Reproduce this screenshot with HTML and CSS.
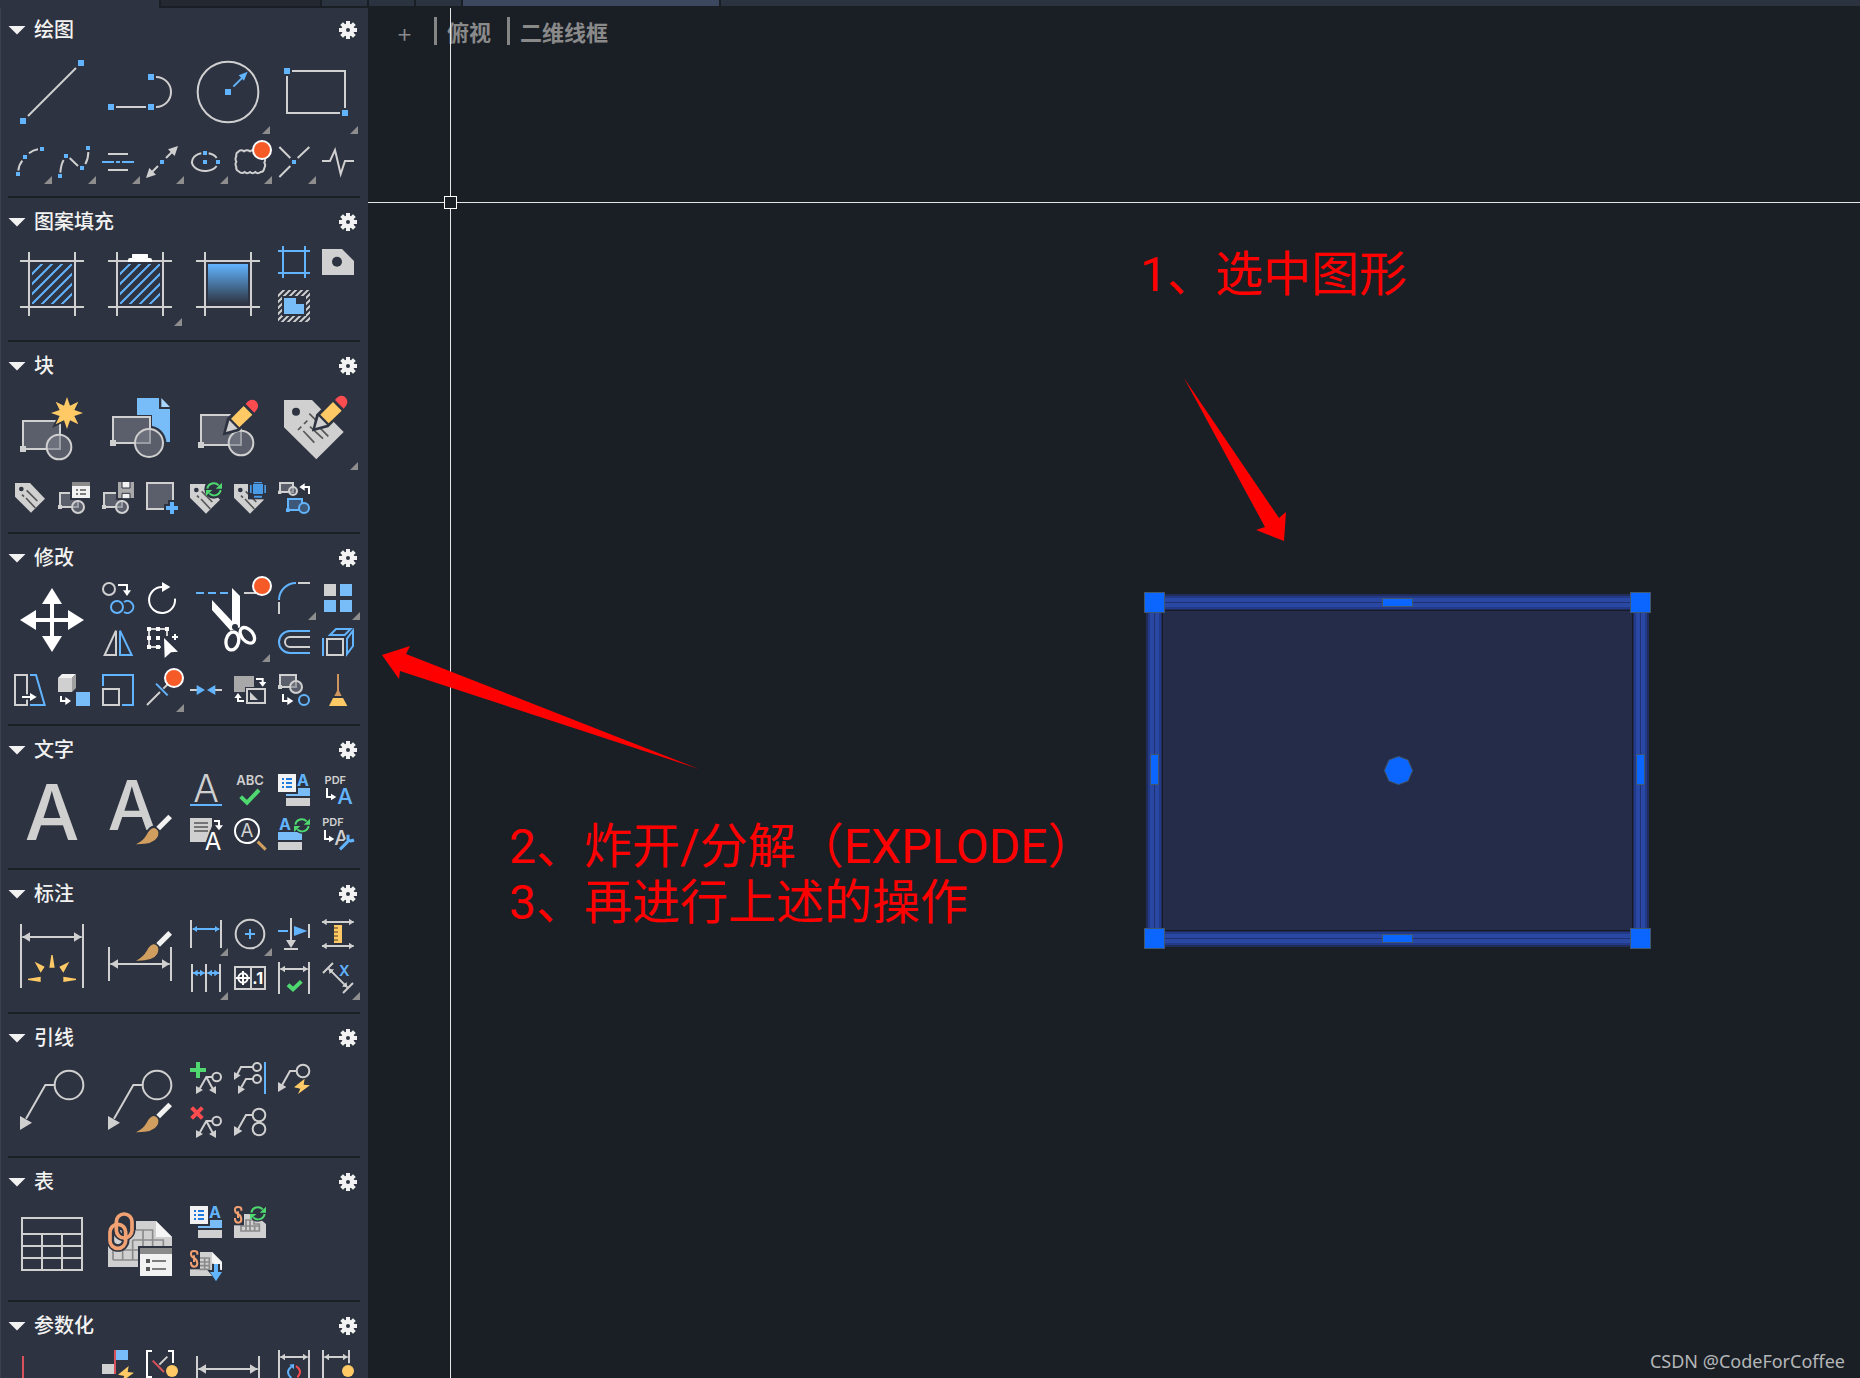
FILE: index.html
```html
<!DOCTYPE html>
<html lang="zh-CN">
<head>
    <meta charset="UTF-8">
    <meta name="viewport" content="width=device-width, initial-scale=1.0">
    <title>CAD 工具面板</title>
    <link rel="stylesheet" href="styles.css">
</head>
<body>
<!-- shared shapes -->
<svg class="defs" aria-hidden="true">
    <defs>
        <marker id="head" viewBox="0 0 24 30" refX="24" refY="15" markerWidth="24" markerHeight="30" markerUnits="userSpaceOnUse" orient="auto-start-reverse"><path d="M0 0L24 15L0 30z" fill="#d0d0d0"/></marker>
        <marker id="head-s" viewBox="0 0 14 20" refX="14" refY="10" markerWidth="14" markerHeight="20" markerUnits="userSpaceOnUse" orient="auto-start-reverse"><path d="M0 0L14 10L0 20z" fill="#d0d0d0"/></marker>
        <marker id="head-b" viewBox="0 0 14 20" refX="14" refY="10" markerWidth="14" markerHeight="20" markerUnits="userSpaceOnUse" orient="auto-start-reverse"><path d="M0 0L14 10L0 20z" fill="#62b4ff"/></marker>
        <linearGradient id="fade" x1="0" y1="0" x2="0" y2="1"><stop offset="0" stop-color="#62b4ff"/><stop offset="1" stop-color="#2d3340"/></linearGradient>
    </defs>
    <symbol id="gear" viewBox="-9 -9 18 18">
        <g fill="#f2f2f2">
            <rect x="-2" y="-9" width="4" height="18"/>
            <rect x="-2" y="-9" width="4" height="18" transform="rotate(45)"/>
            <rect x="-2" y="-9" width="4" height="18" transform="rotate(90)"/>
            <rect x="-2" y="-9" width="4" height="18" transform="rotate(135)"/>
            <circle r="6.5"/>
        </g>
        <circle r="2" fill="#2d3340"/>
    </symbol>
    <symbol id="pencil" viewBox="0 0 104 104" overflow="visible">
        <path class="halo" d="M10 60L60 10Q76-4 90 8Q104 20 92 36L38 90L0 100z"/>
        <path fill="#ffca66" d="M17 58L55 20L81 46L42 84z"/>
        <path fill="#fd4c50" d="M61 14Q74-3 88 3Q104 14 95 30L87 40z"/>
        <path fill="#d0d0d0" d="M12 63L37 88L2 98z"/>
    </symbol>
    <symbol id="brush" viewBox="0 0 108 92" overflow="visible">
        <path class="halo" d="M0 91Q22 80 32 62Q46 36 60 42L96 2L107 13L68 54Q72 92 0 91z"/>
        <path fill="#d09e5f" d="M0 91Q22 80 32 62Q46 36 60 44Q72 52 64 70Q52 92 0 91z"/>
        <path fill="#f2f2f2" d="M61 38L97 2L108 13L72 49z"/>
    </symbol>
    <symbol id="refresh" viewBox="0 0 48 44">
        <path fill="none" stroke="#4ed86f" stroke-width="6" d="M4 20A20 20 0 0 1 38 10M44 24A20 20 0 0 1 10 34"/>
        <path fill="#4ed86f" d="M48 2V20H29zM0 42V24H19z"/>
    </symbol>
    <symbol id="tag" viewBox="0 0 96 96">
        <path class="fl" d="M3 3H48L93 50L51 92L3 44z"/>
        <circle cx="22" cy="21" r="7" fill="#2d3340"/>
        <path class="dk" d="M38 25L70 57M36 48L64 78M24 38l6 6"/>
    </symbol>
    <symbol id="field" viewBox="0 0 96 96">
        <path class="fb" d="M24 42H96V66H24z"/>
        <path class="halo" d="M0 0H54V54H0z"/>
        <path fill="#f2f2f2" d="M0 0H54V54H0z"/>
        <path stroke="#1f7ae0" stroke-width="6" d="M12 15h6M12 27h6M12 39h6M24 15h18M24 27h18M24 39h18"/>
        <text class="tb" x="75" y="36" font-size="48" font-weight="700">A</text>
        <path class="fl" d="M24 72H96V96H24z"/>
    </symbol>
    <symbol id="bolt" viewBox="0 0 48 48"><path fill="#ffca66" d="M32 0L0 26L19 30L12 46L48 20L29 18z"/></symbol>
    <symbol id="leaders" viewBox="0 0 96 96">
        <circle class="ln" cx="80" cy="45" r="13"/>
        <path class="ln" d="M67 45H49L29 80M49 45L68 80"/>
        <path class="fl" d="M18 72V96L39 84zM78 72V96L57 84z"/>
    </symbol>
</svg>

<div class="tabs">
    <span class="tab tab-blank"></span>
    <span class="tab tab-dark"></span>
    <span class="tab"></span>
    <span class="tab"></span>
    <span class="tab"></span>
    <span class="tab tab-active"></span>
    <span class="tab tab-rest"></span>
</div>

<div class="workspace">
<aside class="sidebar">

    <section class="panel">
        <div class="panel-head"><i class="caret"></i><h2>绘图</h2><button class="gear" aria-label="设置"><svg><use href="#gear"/></svg></button></div>
        <div class="tools">
            <button class="big" aria-label="直线"><svg viewBox="0 0 192 192"><path class="ln" d="M24 168L168 24"/><path class="bs" d="M0 174h18v18H0zM174 0h18v18h-18z"/></svg></button>
            <button class="big" aria-label="多段线"><svg viewBox="0 0 192 192"><path class="ln" d="M24 141H114M144 51a45 45 0 0 1 0 90"/><path class="bs" d="M0 132h18v18H0zM120 132h18v18h-18zM120 42h18v18h-18z"/></svg></button>
            <button class="big more" aria-label="圆"><svg viewBox="0 0 192 192"><circle class="ln" cx="96" cy="96" r="91"/><path class="bl" d="M112 80L140 52"/><path class="bs" d="M87 87h18v18H87zM155 35L128 46L144 62z"/></svg></button>
            <button class="big more" aria-label="矩形"><svg viewBox="0 0 192 192"><path class="ln" d="M24 33H183V144M168 159H9V48"/><path class="bs" d="M0 24h18v18H0zM174 150h18v18h-18z"/></svg></button>
        </div>
        <div class="tools row">
            <button class="more" aria-label="圆弧"><svg viewBox="0 0 96 96"><path class="ln" d="M13 74Q15 56 25 44M45 22Q57 12 72 10"/><path class="bs" d="M6 78h12v12H6zM27 27h12v12H27zM78 3h12v12H78z"/></svg></button>
            <button class="more" aria-label="样条曲线"><svg viewBox="0 0 96 96"><path class="ln" d="M7 80Q9 55 17 42M35 36L60 60M82 54Q91 38 91 18"/><path class="bs" d="M0 84h12v12H0zM18 24h12v12H18zM66 60h12v12H66zM84 0h12v12H84z"/></svg></button>
            <button class="more" aria-label="构造线"><svg viewBox="0 0 96 96"><path class="ln" d="M18 24H78M18 72H78"/><path class="bl" d="M0 48H36M42 48H54M60 48H96"/></svg></button>
            <button class="more" aria-label="射线"><svg viewBox="0 0 96 96"><path class="ln" d="M60 36L78 18M36 60L18 78"/><path class="fl" d="M96 0L66 10L86 30zM0 96L10 66L30 86z"/><path class="bs" d="M42 42h12v12H42z"/></svg></button>
            <button class="more" aria-label="椭圆"><svg viewBox="0 0 96 96"><path class="ln" d="M34 22A39 27 0 1 0 80 60M56 22A39 27 0 0 1 80 36"/><path class="bs" d="M39 15h12v12H39zM39 42h12v12H39zM78 42h12v12H78z"/></svg></button>
            <button class="more" aria-label="修订云线"><svg viewBox="0 0 96 96"><path class="ln" d="M12 18q8-9 18-2q9-6 18 0q9-6 18 0q9-6 18 2q10 6 6 16q6 7 1 16q5 8 0 16q-2 12-11 12q-9 7-16 0q-9 7-16 0q-9 7-16 0q-9 7-18-2q-9-4-7-13q-5-8 0-16q-5-8 0-16q-2-10 5-13z"/></svg><b class="dot"></b></button>
            <button class="more" aria-label="点"><svg viewBox="0 0 96 96"><path class="ln" d="M4 3L37 36M59 36L94 3M4 93L37 60"/><path class="bs" d="M42 42h12v12H42z"/></svg></button>
            <button aria-label="折断线"><svg viewBox="0 0 96 96"><path class="ln" d="M0 45H24L39 12L56 84L69 45H96"/></svg></button>
        </div>
    </section>

    <section class="panel">
        <div class="panel-head"><i class="caret"></i><h2>图案填充</h2><button class="gear" aria-label="设置"><svg><use href="#gear"/></svg></button></div>
        <div class="tools">
            <button class="big" aria-label="图案填充"><svg viewBox="0 0 192 192"><path class="ln" d="M27 0V192M165 0V192M0 27H192M0 165H192"/><svg x="36" y="36" width="120" height="120"><path class="bl" d="M-5 35L35-5M-5 65L65-5M-5 95L95-5M-5 125L125-5M25 125L125 25M55 125L125 55M85 125L125 85"/></svg></svg></button>
            <button class="big more" aria-label="填充工具"><svg viewBox="0 0 192 192"><path class="ln" d="M27 0V192M165 0V192M0 27H192M0 165H192"/><path class="halo" d="M66 14H126V30H66z"/><svg x="36" y="36" width="120" height="120"><path class="bl" d="M-5 35L35-5M-5 65L65-5M-5 95L95-5M-5 125L125-5M25 125L125 25M55 125L125 55M85 125L125 85"/></svg><path fill="#fff" d="M60 30V24q0-6 6-6h6V8q0-2 2-2h44q2 0 2 2v10h6q6 0 6 6v6z"/></svg></button>
            <button class="big" aria-label="渐变色"><svg viewBox="0 0 192 192"><path class="ln" d="M27 0V192M165 0V192M0 27H192M0 165H192"/><rect x="36" y="36" width="120" height="120" fill="url(#fade)"/></svg></button>
            <button aria-label="边界"><svg viewBox="0 0 96 96"><path class="bl" d="M0 15H96M0 81H96M15 0V96M81 0V96"/></svg></button>
            <button aria-label="面域"><svg class="clip" viewBox="0 0 96 96"><path class="ln" d="M-4 22L22-4M-4 40L40-4M-4 58L58-4M-4 76L76-4M-4 94L94-4M8 100L100 8M26 100L100 26M44 100L100 44M62 100L100 62M80 100L100 80"/><path fill="#2d3340" d="M12 18H84V78H12z"/><path class="fb" d="M18 24H54V42H78V72H18z"/></svg></button>
            <button aria-label="区域覆盖"><svg viewBox="0 0 96 96"><path class="fl" d="M0 9H60L96 45V87H0z"/><circle cx="45" cy="47" r="15" fill="#2d3340"/></svg></button>
        </div>
    </section>

    <section class="panel">
        <div class="panel-head"><i class="caret"></i><h2>块</h2><button class="gear" aria-label="设置"><svg><use href="#gear"/></svg></button></div>
        <div class="tools">
            <button class="big" aria-label="创建块"><svg viewBox="0 0 192 192"><path class="ln gf" d="M9 75H120V159H9z"/><circle class="ln gt" cx="117" cy="153" r="37"/><path class="fl" d="M0 150h18v18H0z"/><path fill="#ffca66" stroke="#2d3340" stroke-width="10" paint-order="stroke" d="M141 3L150 29L175 17L163 42L189 51L163 60L175 85L150 73L141 99L132 73L107 85L119 60L93 51L119 42L107 17L132 29z"/></svg></button>
            <button class="big" aria-label="插入块"><svg viewBox="0 0 192 192"><path class="fb" d="M87 6H153V39H186V138H120V60H87z"/><path fill="#a9d4fb" d="M160 6L186 33H160z"/><path class="halo" d="M15 63H126V141H15z"/><circle class="halo" cx="123" cy="141" r="46"/><path class="ln gf" d="M15 63H126V141H15z"/><circle class="ln gt" cx="123" cy="141" r="42"/><path class="fl" d="M6 132h18v18H6z"/></svg></button>
            <button class="big" aria-label="编辑块"><svg viewBox="0 0 192 192"><path class="ln gf" d="M15 57H135V147H15z"/><circle class="ln gt" cx="135" cy="141" r="37"/><path class="fl" d="M6 138h18v18H6z"/><use href="#pencil" x="88" y="10" width="104" height="104"/></svg></button>
            <button class="big more" aria-label="编辑属性"><svg viewBox="0 0 192 192"><path class="fl" d="M0 12H84L179 108L97 190L0 94z"/><circle cx="36" cy="47" r="12" fill="#2d3340"/><path class="dk" d="M58 105L91 140M78 92L117 128M104 92L133 121M76 53L100 77M42 102l10-10M60 84l10-10"/><use href="#pencil" x="92" y="-2" width="104" height="104"/></svg></button>
        </div>
        <div class="tools row">
            <button aria-label="定义属性"><svg><use href="#tag"/></svg></button>
            <button aria-label="块特性"><svg viewBox="0 0 96 96"><path class="ln gf" d="M6 33H60V75H6z"/><circle class="ln gt" cx="60" cy="75" r="18"/><path class="fl" d="M0 69h12v12H0z"/><path class="halo" d="M42 0H96V48H42z"/><path fill="#f2f2f2" d="M42 12H96V48H42z"/><path fill="#8a8a8a" d="M42 0H96V12H42z"/><path class="dk" d="M54 24h6M66 24h18M54 36h6M66 36h18"/></svg></button>
            <button aria-label="保存块"><svg class="clip" viewBox="0 0 96 96"><path class="ln gf" d="M6 33H60V75H6z"/><circle class="ln gt" cx="60" cy="75" r="18"/><path class="fl" d="M0 69h12v12H0z"/><path class="halo" d="M48 0H96V48H48z"/><path fill="#a8a8a8" d="M48 0H96V48H48z"/><path fill="#f2f2f2" stroke="#2d3340" stroke-width="3" d="M60-2H84V18H60zM60 34H84V50H60z"/></svg></button>
            <button aria-label="添加块"><svg viewBox="0 0 96 96"><path class="ln gf" d="M3 3H81V81H3z"/><path stroke="#2d3340" stroke-width="24" d="M78 54V96M54 78H96"/><path stroke="#62b4ff" stroke-width="12" d="M78 60V96M60 78H96"/></svg></button>
            <button aria-label="同步属性"><svg viewBox="0 0 96 96"><use href="#tag" x="-3" y="3" width="96" height="96"/><circle cx="71" cy="22" r="28" fill="#2d3340"/><use href="#refresh" x="48" y="0" width="48" height="44"/></svg></button>
            <button aria-label="管理属性"><svg viewBox="0 0 96 96"><use href="#tag" x="-3" y="3" width="96" height="96"/><path fill="#2d3340" d="M42-4H100V52H42z"/><path fill="#4a9be6" d="M57 6H87V36H57zM48 9h5V33h-5zM91 9h5V33h-5zM60 0H84V4H60zM60 41H84V47H60z"/></svg></button>
            <button aria-label="替换块"><svg viewBox="0 0 96 96"><path class="ln gf" d="M6 3H45V30H6z"/><circle class="ln gt" cx="45" cy="27" r="12"/><path class="fl" d="M0 26h10v10H0z"/><path class="wl" d="M93 36V15H78"/><path fill="#fff" d="M64 15L80 4V26z"/><path class="bl bf" d="M30 51H72V84H30z"/><circle class="bl bf" cx="78" cy="78" r="15"/><path class="bs" d="M24 79h11v11H24z"/></svg></button>
        </div>
    </section>

    <section class="panel">
        <div class="panel-head"><i class="caret"></i><h2>修改</h2><button class="gear" aria-label="设置"><svg><use href="#gear"/></svg></button></div>
        <div class="tools">
            <button class="big" aria-label="移动"><svg viewBox="0 0 192 192"><path stroke="#fff" stroke-width="12" d="M96 30V162M30 96H162"/><path fill="#fff" d="M96 0L126 48H66zM96 192L126 144H66zM0 96L48 66V126zM192 96L144 66V126z"/></svg></button>
            <button aria-label="复制"><svg viewBox="0 0 96 96"><circle class="ln" cx="21" cy="21" r="18"/><circle class="bl" cx="45" cy="75" r="18"/><path class="bl" d="M66 60a18 18 0 1 1 0 30"/><path class="wl" d="M48 9H75V28"/><path fill="#fff" d="M63 25H87L75 42z"/></svg></button>
            <button aria-label="镜像"><svg viewBox="0 0 96 96"><path class="ln" d="M42 14V87H8z"/><path class="bl" d="M54 14V87H89z"/></svg></button>
            <button aria-label="旋转"><svg viewBox="0 0 96 96"><path class="wl" d="M87 50A39 39 0 1 1 48 15"/><path fill="#fff" d="M48 0L73 15L48 30z"/></svg></button>
            <button aria-label="拉伸"><svg viewBox="0 0 96 96"><path class="ln" d="M63 30V9H9V63H45"/><path fill="#fff" d="M3 3h12v12H3zM30 3h12v12H30zM57 3h12v12H57zM3 30h12v12H3zM30 30h12v12H30zM3 57h12v12H3zM30 57h12v12H30zM54 36L96 77L75 79L56 96z"/><path class="wl" d="M87 24V42M78 33H96"/></svg></button>
            <button class="big more" aria-label="修剪"><svg viewBox="0 0 192 192"><path class="bl" d="M0 15H24M36 15H60M72 15H96"/><path class="ln" d="M144 15H180"/><path fill="#fff" d="M108 0L132 24V118L104 128L48 66V36L108 100z"/><circle cx="117" cy="117" r="9" fill="#2d3340"/><g fill="none" stroke="#fff" stroke-width="10"><ellipse cx="109" cy="159" rx="19" ry="27" transform="rotate(12 109 159)"/><ellipse cx="154" cy="142" rx="17" ry="27" transform="rotate(-40 154 142)"/></g></svg><b class="dot"></b></button>
            <button class="more" aria-label="圆角"><svg viewBox="0 0 96 96"><path class="bl" d="M3 54A51 51 0 0 1 54 3"/><path class="ln" d="M60 3H96M3 60V96"/></svg></button>
            <button aria-label="偏移"><svg viewBox="0 0 96 96"><path class="bl" d="M96 15H36a33 33 0 0 0 0 66H96"/><path class="ln" d="M96 33H36a15 15 0 0 0 0 30H96"/></svg></button>
            <button class="more" aria-label="阵列"><svg viewBox="0 0 96 96"><path class="fl" d="M6 6h36v36H6z"/><path class="fb" d="M54 6h36v36H54zM6 54h36v36H6zM54 54h36v36H54z"/></svg></button>
            <button aria-label="拉伸面"><svg viewBox="0 0 96 96"><path class="ln" d="M15 39H63V87H15z"/><path class="bl" d="M3 36V90M24 27L42 9H86L68 27zM75 38L93 14V60L75 84z"/></svg></button>
        </div>
        <div class="tools row">
            <button aria-label="斜切"><svg viewBox="0 0 96 96"><path class="ln" d="M3 3H39V93H3z"/><path class="bl" d="M48 3H66L92 93H48"/><path stroke="#2d3340" stroke-width="16" d="M30 69H50"/><path class="wl" d="M24 69H52"/><path fill="#fff" d="M48 57L68 69L48 81z"/></svg></button>
            <button aria-label="对齐"><svg viewBox="0 0 96 96"><path class="fl" d="M0 12H42V54H0z"/><path fill="#f2f2f2" d="M0 12L12 0H54L42 12z"/><path fill="#a0a0a0" d="M42 12L54 0V42L42 54z"/><path class="fb" d="M54 54H96V96H54z"/><path class="wl" d="M9 66V81H24"/><path fill="#fff" d="M22 69L39 81L22 93z"/></svg></button>
            <button aria-label="缩放"><svg viewBox="0 0 96 96"><path class="bl" d="M3 36V3H93V93H60"/><path class="ln" d="M3 45H51V93H3z"/></svg></button>
            <button class="more" aria-label="打断"><svg viewBox="0 0 96 96"><path class="ln" d="M3 93L42 54M52 44L72 24"/><path class="bl" d="M30 29L65 64"/></svg><b class="dot"></b></button>
            <button aria-label="合并"><svg viewBox="0 0 96 96"><path class="ln" d="M0 48H24M72 48H96"/><path class="bs" d="M20 33L45 48L20 63zM76 33L51 48L76 63z"/></svg></button>
            <button aria-label="反转"><svg viewBox="0 0 96 96"><path fill="#a8a8a8" d="M0 6H60V54H0z"/><path class="halo" d="M39 45H93V87H39z"/><path class="ln" d="M39 45H93V87H39z"/><path class="fl" d="M48 54V78H72z"/><path class="wl" d="M66 15H86V26M30 81H12V68"/><path fill="#fff" d="M75 24H97L86 38zM1 72H23L12 57z"/></svg></button>
            <button aria-label="分解"><svg viewBox="0 0 96 96"><path class="ln gf" d="M6 3H54V39H6z"/><circle class="ln gt" cx="54" cy="39" r="18"/><path class="fl" d="M0 33h12v12H0z"/><path class="wl" d="M15 60V81H30"/><path fill="#fff" d="M28 69L46 81L28 93z"/><circle class="bl" cx="78" cy="78" r="15"/></svg></button>
            <button aria-label="清理"><svg viewBox="0 0 96 96"><path stroke="#d0955f" stroke-width="6" d="M48 0V56"/><path fill="#d0955f" d="M45 50H51L59 66H37z"/><path fill="#ffca66" d="M33 72H63L76 96H21z"/></svg></button>
        </div>
    </section>

    <section class="panel">
        <div class="panel-head"><i class="caret"></i><h2>文字</h2><button class="gear" aria-label="设置"><svg><use href="#gear"/></svg></button></div>
        <div class="tools">
            <button class="big" aria-label="多行文字"><svg viewBox="0 0 192 192"><text class="tl" x="96" y="180" font-size="231" font-weight="500">A</text></svg></button>
            <button class="big" aria-label="文字样式"><svg viewBox="0 0 192 192"><text class="tl" x="72" y="150" font-size="206" font-weight="500">A</text><use href="#brush" x="84" y="102" width="108" height="92"/></svg></button>
            <button aria-label="单行文字"><svg viewBox="0 0 96 96"><text class="tl" x="48" y="84" font-size="114" font-weight="300">A</text><path class="bl" d="M0 93H96"/></svg></button>
            <button aria-label="文字转换"><svg viewBox="0 0 96 96"><path class="fl" d="M0 0H66V24L48 72H0z"/><path class="dk" d="M12 15H54M12 27H54M12 39H54"/><path class="wl" d="M72 9H87V26"/><path fill="#fff" d="M75 22H99L87 37z"/><text class="tw out" x="69" y="95" font-size="72" font-weight="400">A</text></svg></button>
            <button aria-label="拼写检查"><svg viewBox="0 0 96 96"><text class="tl" x="48" y="34" font-size="39" font-weight="600">ABC</text><path fill="none" stroke="#4ed86f" stroke-width="12" d="M20 68L39 86L75 48"/></svg></button>
            <button aria-label="查找文字"><svg viewBox="0 0 96 96"><circle class="wl" cx="39" cy="39" r="36"/><text class="tl" x="39" y="58" font-size="56" font-weight="400">A</text><path stroke="#d09e5f" stroke-width="9" d="M71 71L95 95"/></svg></button>
            <button aria-label="字段"><svg><use href="#field"/></svg></button>
            <button aria-label="更新字段"><svg viewBox="0 0 96 96"><text class="tb" x="21" y="36" font-size="48" font-weight="700">A</text><path class="fb" d="M0 42H72V66H0z"/><path class="fl" d="M0 72H72V96H0z"/><circle cx="72" cy="22" r="25" fill="#2d3340"/><use href="#refresh" x="48" y="0" width="48" height="44"/></svg></button>
            <button aria-label="PDF 文字"><svg viewBox="0 0 96 96"><text class="tl" x="40" y="30" font-size="33" font-weight="600">PDF</text><path class="wl" d="M15 42V69H28"/><path fill="#fff" d="M27 59L43 69L27 79z"/><text class="tb" x="69" y="90" font-size="66" font-weight="500">A</text></svg></button>
            <button aria-label="PDF 设置"><svg viewBox="0 0 96 96"><text class="tl" x="33" y="24" font-size="33" font-weight="600">PDF</text><path class="wl" d="M9 36V63H22"/><path fill="#fff" d="M21 53L37 63L21 73z"/><text class="tl" x="58" y="81" font-size="60" font-weight="500">A</text><path fill="none" stroke="#2d3340" stroke-width="20" d="M50 100L84 64"/><path fill="none" stroke="#62b4ff" stroke-width="9" d="M54 94L78 70M78 50V64Q82 72 96 66"/></svg></button>
        </div>
    </section>

    <section class="panel">
        <div class="panel-head"><i class="caret"></i><h2>标注</h2><button class="gear" aria-label="设置"><svg><use href="#gear"/></svg></button></div>
        <div class="tools">
            <button class="big" aria-label="标注"><svg viewBox="0 0 192 192"><path class="ln" d="M3 0V192M189 0V192"/><path class="ln ar" d="M7 39H185"/><path fill="#ffca66" d="M94 93H98L104 131H88zM44 113L74 128L62 146zM148 113L118 128L130 146zM24 164L62 158V174L24 168zM168 164L130 158V174L168 168z"/></svg></button>
            <button class="big" aria-label="标注样式"><svg viewBox="0 0 192 192"><path class="ln" d="M3 69V171M189 69V171"/><path class="ln ar" d="M7 120H185"/><use href="#brush" x="84" y="19" width="108" height="92"/></svg></button>
            <button class="more" aria-label="线性"><svg viewBox="0 0 96 96"><path class="ln" d="M3 6V90M93 6V90"/><path class="bl ab" d="M8 33H88"/></svg></button>
            <button class="more" aria-label="连续"><svg viewBox="0 0 96 96"><path class="ln" d="M6 6V90M48 6V90M90 6V90"/><path class="bl ab" d="M9 33H44"/><path class="bl ab" d="M52 33H87"/></svg></button>
            <button class="more" aria-label="直径"><svg viewBox="0 0 96 96"><circle class="ln" cx="48" cy="48" r="43"/><path class="bl" d="M48 33V63M33 48H63"/></svg></button>
            <button aria-label="公差"><svg viewBox="0 0 96 96"><path class="ln" d="M3 15H93V81H3zM51 15V81"/><circle class="wl" cx="27" cy="48" r="14"/><path class="wl" d="M27 27V69M6 48H48"/><text class="tw" x="71" y="66" font-size="48" font-weight="700">.1</text></svg></button>
            <button aria-label="坐标"><svg viewBox="0 0 96 96"><path class="bl" d="M0 39H30"/><path class="ln" d="M39 0V72M18 93H60M93 18V60"/><path class="fl" d="M24 66H54L39 90z"/><path class="bs" d="M48 24L88 39L48 54z"/></svg></button>
            <button aria-label="检验"><svg viewBox="0 0 96 96"><path class="ln" d="M3 0V96M93 0V96"/><path class="ln as" d="M7 21H89"/><path fill="none" stroke="#4ed86f" stroke-width="12" d="M30 68L45 82L70 58"/></svg></button>
            <button aria-label="间距"><svg viewBox="0 0 96 96"><path class="ln as" d="M0 12H95"/><path class="ln as" d="M0 84H95"/><path fill="#ffca66" d="M36 21H60V75H36z"/><path stroke="#8a6a30" stroke-width="4" d="M36 30H48M36 42H48M36 54H48M36 66H48"/></svg></button>
            <button class="more" aria-label="倾斜"><svg viewBox="0 0 96 96"><path class="ln" d="M3 33L33 3M63 93L93 63"/><path class="ln as" d="M20 20L76 76"/><text class="tb" x="67" y="42" font-size="44" font-weight="600">X</text></svg></button>
        </div>
    </section>

    <section class="panel">
        <div class="panel-head"><i class="caret"></i><h2>引线</h2><button class="gear" aria-label="设置"><svg><use href="#gear"/></svg></button></div>
        <div class="tools">
            <button class="big" aria-label="多重引线"><svg viewBox="0 0 192 192"><circle class="ln" cx="147" cy="51" r="43"/><path class="ln" d="M104 51H76L18 152"/><path class="fl" d="M0 144V186L36 164z"/></svg></button>
            <button class="big" aria-label="引线样式"><svg viewBox="0 0 192 192"><circle class="ln" cx="147" cy="51" r="43"/><path class="ln" d="M104 51H76L18 152"/><path class="fl" d="M0 144V186L36 164z"/><use href="#brush" x="84" y="102" width="108" height="92"/></svg></button>
            <button aria-label="添加引线"><svg viewBox="0 0 96 96"><use href="#leaders"/><path stroke="#4ed86f" stroke-width="12" d="M24 0V48M0 24H48"/></svg></button>
            <button aria-label="删除引线"><svg viewBox="0 0 96 96"><use href="#leaders"/><path stroke="#fd4c50" stroke-width="12" d="M5 5L37 37M37 5L5 37"/></svg></button>
            <button aria-label="对齐引线"><svg viewBox="0 0 96 96"><circle class="ln" cx="69" cy="15" r="12"/><circle class="ln" cx="69" cy="51" r="12"/><path class="ln" d="M57 15H21L10 36M57 51H36L22 76"/><path class="fl" d="M0 30V54L20 40zM12 70V96L33 82z"/><path class="bl" d="M93 0V96"/></svg></button>
            <button aria-label="合并引线"><svg viewBox="0 0 96 96"><circle class="ln" cx="75" cy="27" r="19"/><circle class="ln" cx="75" cy="69" r="19"/><path class="ln" d="M56 27H36L12 70"/><path class="fl" d="M0 60V90L25 75z"/></svg></button>
            <button aria-label="快速引线"><svg viewBox="0 0 96 96"><circle class="ln" cx="75" cy="27" r="19"/><path class="ln" d="M56 27H36L12 70"/><path class="fl" d="M0 60V90L25 75z"/><use href="#bolt" x="48" y="50" width="48" height="48"/></svg></button>
        </div>
    </section>

    <section class="panel">
        <div class="panel-head"><i class="caret"></i><h2>表</h2><button class="gear" aria-label="设置"><svg><use href="#gear"/></svg></button></div>
        <div class="tools">
            <button class="big" aria-label="表格"><svg viewBox="0 0 192 192"><path class="ln" d="M6 18H186V174H6zM6 66H186M6 102H186M6 138H186M66 66V174M126 66V174"/></svg></button>
            <button class="big" aria-label="数据链接"><svg viewBox="0 0 192 192"><path class="fl" d="M0 54H84V27H144L192 75V165H0z"/><path fill="#f5f5f5" d="M144 27L192 75H144z"/><path fill="none" stroke="#8a8a8a" stroke-width="5" d="M84 54H134V84H166V112M15 144V114H105M15 144H96M74 84H134M74 114V84M44 114V144M74 114V144M105 54V114M134 84V112"/><path class="halo" d="M96 108H192V192H96z"/><path fill="#f2f2f2" d="M96 126H192V192H96z"/><path fill="#8a8a8a" d="M96 108H192V126H96z"/><path class="dk" d="M132 147H174M132 171H174"/><path fill="#555" d="M114 141h12v12h-12zM114 165h12v12h-12z"/><g fill="none" stroke="#2d3340" stroke-width="23"><rect x="25" y="6" width="46" height="70" rx="23"/><rect x="7" y="38" width="46" height="70" rx="23"/></g><g fill="none" stroke="#f2a172" stroke-width="11"><rect x="25" y="6" width="47" height="72" rx="23"/><rect x="6" y="37" width="47" height="72" rx="23"/></g></svg></button>
            <button aria-label="字段"><svg><use href="#field"/></svg></button>
            <button aria-label="下载数据"><svg viewBox="0 0 96 96"><path class="fl" d="M0 57H30V6H66L96 36V78H0z"/><path fill="#f5f5f5" d="M66 6L96 36V60L66 36z"/><path fill="none" stroke="#8a8a8a" stroke-width="5" d="M30 24H58V58H28M30 36H58M30 47H58M44 24V58"/><path fill="none" stroke="#2d3340" stroke-width="16" d="M4 4H20V50H4z"/><path fill="none" stroke="#2d3340" stroke-width="24" d="M78 42V66"/><path fill="#2d3340" d="M52 60H100V100H84z"/><path fill="#62b4ff" d="M72 42H84V66H96L78 94L60 66H72z"/><g fill="none" stroke="#f2a172" stroke-width="6"><path d="M22 14V10Q22 3 12 3T3 12Q3 20 12 24T22 40Q22 50 13 50T3 40V36"/><path d="M12 16V36"/></g></svg></button>
            <button aria-label="更新数据"><svg viewBox="0 0 96 96"><path class="fl" d="M0 57H30V24H60L96 54V96H0z"/><path fill="none" stroke="#8a8a8a" stroke-width="5" d="M33 42H60V54H76V75H21V60H76M36 42V75M48 42V75M62 60V75"/><path fill="none" stroke="#2d3340" stroke-width="16" d="M4 4H20V50H4z"/><circle cx="72" cy="22" r="25" fill="#2d3340"/><use href="#refresh" x="48" y="0" width="48" height="44"/><g fill="none" stroke="#f2a172" stroke-width="6"><path d="M22 14V10Q22 3 12 3T3 12Q3 20 12 24T22 40Q22 50 13 50T3 40V36"/><path d="M12 16V36"/></g></svg></button>
        </div>
    </section>

    <section class="panel">
        <div class="panel-head"><i class="caret"></i><h2>参数化</h2><button class="gear" aria-label="设置"><svg><use href="#gear"/></svg></button></div>
        <div class="tools">
            <button class="big" aria-label="竖直约束"><svg viewBox="0 0 192 192"><path stroke="#d9525b" stroke-width="6" d="M9 0V192"/></svg></button>
            <button class="tall" aria-label="自动约束"><svg viewBox="0 0 96 96"><path stroke="#d9525b" stroke-width="6" d="M39 0V72"/><path class="fb" d="M42 0H78V30H42z"/><path class="fl" d="M0 42H36V72H0z"/><use href="#bolt" x="48" y="48" width="48" height="48"/></svg></button>
            <button class="tall" aria-label="显示约束"><svg viewBox="0 0 96 96"><path class="wl" d="M18 3H3V81H18M66 3H81V39"/><path class="ln" d="M64 20L40 44"/><path stroke="#d9525b" stroke-width="6" d="M20 32L54 66"/><circle cx="78" cy="63" r="18" fill="#ffca66"/></svg></button>
            <button class="big" aria-label="标注约束"><svg viewBox="0 0 192 192"><path class="ln" d="M3 0V192M189 0V192"/><path class="ln ar" d="M7 39H185"/></svg></button>
            <button class="tall" aria-label="转换约束"><svg viewBox="0 0 96 96"><path class="ln" d="M3 0V96M93 0V96"/><path class="ln as" d="M7 21H89"/><path class="bl" d="M40 84Q20 66 40 50"/><path class="bs" d="M34 44L48 42V58z"/><path fill="none" stroke="#fd4c50" stroke-width="6" d="M54 48Q76 64 58 82"/></svg></button>
            <button class="tall" aria-label="显示标注"><svg viewBox="0 0 96 96"><path class="ln" d="M3 0V96M81 0V40"/><path class="ln as" d="M7 21H77"/><circle cx="78" cy="63" r="18" fill="#ffca66"/></svg></button>
        </div>
    </section>
</aside>

<main class="canvas">
    <div class="crosshair-x"></div>
    <div class="view-bar"><a class="plus" href="#">+</a><a href="#">俯视</a><a href="#">二维线框</a></div>
    <div class="crosshair-y"></div>
    <div class="pickbox"></div>

    <p class="note note-select">1、选中图形</p>
    <p class="note note-explode">2、炸开/分解（EXPLODE）<br>3、再进行上述的操作</p>

    <svg class="arrow-select" viewBox="0 0 104 164"><path fill="#f00" d="M0 0L95 140L102 134L100 163L72 152L81 149z"/></svg>
    <svg class="arrow-explode" viewBox="0 0 317 123"><path fill="#f00" d="M0 9L28 0L24 8L317 123L18 25L17 33z"/></svg>

    <!-- selected rectangle with its grips -->
    <svg class="shape" viewBox="0 0 508 358">
        <rect x="10.5" y="10.5" width="486" height="336" fill="#252c49" stroke="#1f2c5c" stroke-width="17"/>
        <rect x="10.5" y="10.5" width="486" height="336" fill="none" stroke="#223a88" stroke-width="13"/>
        <rect x="10.5" y="10.5" width="486" height="336" fill="none" stroke="#2848a4" stroke-width="9"/>
        <rect x="10.5" y="10.5" width="486" height="336" fill="none" stroke="#203070" stroke-width="1"/>
        <rect x="18.5" y="18.5" width="470" height="320" fill="none" stroke="#171a22" stroke-width="1"/>
        <g fill="#0a66ff" stroke="#41566f" stroke-width="1">
            <rect x=".5" y=".5" width="20" height="20"/>
            <rect x="486.5" y=".5" width="20" height="20"/>
            <rect x=".5" y="336.5" width="20" height="20"/>
            <rect x="486.5" y="336.5" width="20" height="20"/>
            <rect x="238.5" y="6.5" width="30" height="8"/>
            <rect x="238.5" y="342.5" width="30" height="8"/>
            <rect x="6.5" y="162.5" width="8" height="30"/>
            <rect x="492.5" y="162.5" width="8" height="30"/>
            <path d="M254.5 164.5L264 168L268.5 178.5L264 189L254.5 192.5L245 189L240.5 178.5L245 168z"/>
        </g>
    </svg>

    <div class="watermark">CSDN @CodeForCoffee</div>
</main>
</div>
</body>
</html>
```
FILE: styles.css
```css
* {
    box-sizing: border-box;
}

body {
    margin: 0;
    height: 100vh;
    overflow: hidden;
    display: flex;
    flex-direction: column;
    background: #1a1f26;
    font-family: Inter, "Noto Sans CJK SC", sans-serif;
}

button {
    border: 0;
    padding: 0;
    background: none;
    cursor: pointer;
}

.defs {
    position: absolute;
    width: 0;
    height: 0;
}

/* top strip */
.tabs {
    display: flex;
    gap: 2px;
    height: 8px;
    padding-bottom: 2px;
    flex-shrink: 0;
}

.tab {
    width: 45px;
    background: #2b3340;
}

.tab-blank {
    width: 159px;
    margin-bottom: -2px;
    background: #2d3340;
}

.tab-dark {
    width: 159px;
    background: #232831;
}

.tab-active {
    width: 256px;
    background: #3c4760;
}

.tab-rest {
    flex: 1;
}

.workspace {
    flex: 1;
    display: flex;
    min-height: 0;
}

/* tool palette */
.sidebar {
    width: 368px;
    flex-shrink: 0;
    padding: 0 8px 0 7px;
    border-left: 1px solid #394150;
    background: #2d3340;
    overflow: hidden;
}

.panel {
    padding-bottom: 12px;
    border-top: 2px solid #1b2027;
}

.panel:first-child {
    border-top: 0;
}

.panel-head {
    display: flex;
    align-items: center;
    height: 42px;
    padding: 6px 3px 0 0;
}

.panel:first-child .panel-head {
    height: 40px;
    padding-top: 4px;
}

.caret {
    width: 18px;
    height: 9px;
    background: #f2f2f2;
    clip-path: polygon(0 0, 100% 0, 50% 100%);
}

.panel-head h2 {
    flex: 1;
    margin: 0 0 0 8px;
    font-size: 20px;
    line-height: 30px;
    font-weight: 500;
    color: #f2f2f2;
}

.gear,
.gear svg {
    display: block;
    width: 18px;
    height: 18px;
}

.tools {
    display: grid;
    grid-template: 44px 44px / repeat(8, 44px);
    grid-auto-flow: column;
}

.tools.row {
    grid-template-rows: 44px;
    margin-top: 4px;
}

.tools button {
    position: relative;
    display: flex;
    align-items: center;
    justify-content: center;
}

.tools button svg {
    width: 32px;
    height: 32px;
    overflow: visible;
}

.tools button .clip {
    overflow: hidden;
}

.tools .big {
    grid-area: span 2 / span 2;
}

.tools .tall {
    grid-row: span 2;
    align-items: flex-start;
    padding-top: 6px;
}

.tools .big > svg {
    width: 64px;
    height: 64px;
}

.tools .big > svg svg {
    width: 120px;
    height: 120px;
    overflow: hidden;
}

.more::after {
    content: "";
    position: absolute;
    right: 0;
    bottom: 0;
    width: 8px;
    height: 8px;
    background: #8e8e8e;
    clip-path: polygon(100% 0, 100% 100%, 0 100%);
}

.big.more::after {
    right: 2px;
    bottom: 2px;
}

.dot {
    position: absolute;
    top: 0;
    right: 0;
    width: 20px;
    height: 20px;
    border: 2px solid #fff;
    border-radius: 50%;
    background: #f65a27;
}

/* icon strokes and fills */
.ln,
.bl,
.wl {
    fill: none;
    stroke: #d0d0d0;
    stroke-width: 6;
}

.bl {
    stroke: #62b4ff;
}

.wl {
    stroke: #fff;
}

.dk {
    fill: none;
    stroke: #555;
    stroke-width: 5;
}

.fl {
    fill: #d0d0d0;
}

.fb {
    fill: #79bdf8;
}

.bs {
    fill: #62b4ff;
}

.bf {
    fill: #3d5878;
}

.gf {
    fill: #5b5f6b;
}

.gt {
    fill: rgba(120, 124, 136, 0.6);
}

.halo {
    fill: #2d3340;
    stroke: #2d3340;
    stroke-width: 12;
}

.tl,
.tb,
.tw {
    fill: #d0d0d0;
    text-anchor: middle;
    font-family: Inter, sans-serif;
}

.tb {
    fill: #62b4ff;
}

.tw {
    fill: #fff;
}

.out {
    stroke: #2d3340;
    stroke-width: 12;
    paint-order: stroke;
}

.ar {
    marker-start: url(#head);
    marker-end: url(#head);
}

.as {
    marker-start: url(#head-s);
    marker-end: url(#head-s);
}

.ab {
    marker-start: url(#head-b);
    marker-end: url(#head-b);
}

/* drawing area */
.canvas {
    position: relative;
    flex: 1;
    min-width: 0;
    overflow: hidden;
    background: #1a1f26;
}

.view-bar {
    display: flex;
    align-items: center;
    padding: 9px 0 0 28px;
}

.view-bar a {
    height: 28px;
    padding-left: 10px;
    margin-right: 16px;
    border-left: 3px solid #858585;
    font-size: 22px;
    line-height: 32px;
    font-weight: 700;
    color: #8a8a8a;
    text-decoration: none;
}

.view-bar .plus {
    width: 22px;
    padding: 0;
    border: 0;
    font-size: 26px;
    font-weight: 300;
}

.crosshair-x {
    position: absolute;
    top: 194px;
    left: 0;
    right: 0;
    height: 1px;
    background: #e6e6e6;
}

.crosshair-y {
    position: absolute;
    top: 0;
    bottom: 0;
    left: 82px;
    width: 1px;
    background: #e6e6e6;
}

.pickbox {
    position: absolute;
    top: 188px;
    left: 76px;
    width: 13px;
    height: 13px;
    border: 1px solid #fff;
    background: #1a1f26;
}

.note {
    position: absolute;
    margin: 0;
    font-family: Roboto, "Noto Sans CJK SC", sans-serif;
    font-size: 48px;
    line-height: 56px;
    color: #f00;
    white-space: nowrap;
}

.note-select {
    left: 772px;
    top: 239px;
}

.note-explode {
    left: 141px;
    top: 811px;
}

.arrow-select {
    position: absolute;
    left: 816px;
    top: 370px;
    width: 104px;
    height: 164px;
}

.arrow-explode {
    position: absolute;
    left: 14px;
    top: 638px;
    width: 317px;
    height: 123px;
}

.shape {
    position: absolute;
    left: 776px;
    top: 584px;
    width: 508px;
    height: 358px;
}

.watermark {
    position: absolute;
    right: 15px;
    bottom: 6px;
    font-family: "Noto Sans", sans-serif;
    font-size: 18px;
    line-height: 22px;
    color: #b4b6b8;
}
```
